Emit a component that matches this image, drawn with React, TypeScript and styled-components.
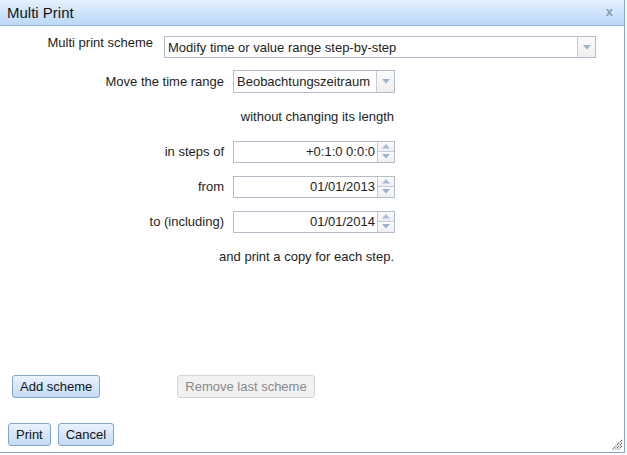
import { createGlobalStyle, default as styled } from "styled-components";

const GlobalStyle = createGlobalStyle`
	html, body {
		margin: 0;
		padding: 0;
		background: #ffffff;
	}
	body {
		font-family: "Liberation Sans", Arial, sans-serif;
		font-size: 13px;
		color: #1e1e1e;
	}
`;

const Dialog = styled.div`
	width: 624px;
	height: 452px;
	display: flex;
	flex-direction: column;
	border-right: 1px solid #7fa9d6;
	border-bottom: 1px solid #7fa9d6;
	background: #ffffff;
	position: relative;
`;

const TitleBar = styled.div`
	flex: 0 0 25px;
	display: flex;
	align-items: center;
	justify-content: space-between;
	padding: 0 11px 0 7px;
	background: linear-gradient(to bottom, #e4f0fd 0%, #cfe4fb 50%, #bcd8f7 100%);
	border-bottom: 1px solid #8db2dc;
	font-size: 15px;
	color: #141414;
`;

const CloseButton = styled.span`
	font-size: 13px;
	font-weight: bold;
	color: #8e9cad;
	cursor: pointer;
	margin-top: -2px;
`;

const Body = styled.div`
	flex: 1;
	display: flex;
	flex-direction: column;
`;

const SchemeRow = styled.div`
	display: flex;
	align-items: flex-start;
	margin-top: 10px;
`;

const SchemeLabel = styled.div`
	width: 153px;
	text-align: right;
	margin-right: 11px;
	margin-top: -1px;
	line-height: 15px;
`;

const FormGrid = styled.div`
	display: grid;
	grid-template-columns: 224px 162px;
	grid-auto-rows: 35px;
	column-gap: 9px;
	align-items: center;
	margin-top: 6px;
`;

const Label = styled.div`
	text-align: right;
`;

const Note = styled.div`
	grid-column: 1 / -1;
	text-align: right;
	padding-right: 1px;
`;

const SelectBox = styled.div<{ $width: number; $height: number }>`
	width: ${(p) => p.$width}px;
	height: ${(p) => p.$height}px;
	box-sizing: border-box;
	border: 1px solid #b4bdcc;
	display: flex;
	align-items: stretch;
	background: #ffffff;
`;

const SelectText = styled.div`
	flex: 1;
	display: flex;
	align-items: center;
	padding-left: 3px;
	white-space: nowrap;
	overflow: hidden;
`;

const ArrowBox = styled.div`
	flex: 0 0 17px;
	border-left: 1px solid #c6ccd6;
	background: linear-gradient(to bottom, #fbfbfb, #eeeeee);
	display: flex;
	align-items: center;
	justify-content: center;
`;

const InputBox = styled.div`
	width: 162px;
	height: 22px;
	box-sizing: border-box;
	border: 1px solid #b4bdcc;
	display: flex;
	align-items: stretch;
	background: #ffffff;
`;

const InputText = styled.div`
	flex: 1;
	display: flex;
	align-items: center;
	justify-content: flex-end;
	padding-right: 2px;
`;

const Spinner = styled.div`
	flex: 0 0 16px;
	border-left: 1px solid #c6ccd6;
	display: flex;
	flex-direction: column;
`;

const SpinHalf = styled.div<{ $top?: boolean }>`
	flex: 1;
	display: flex;
	align-items: center;
	justify-content: center;
	background: linear-gradient(to bottom, #fbfbfb, #efefef);
	border-top: ${(p) => (p.$top ? "none" : "1px solid #c6ccd6")};
`;

const Spacer = styled.div`
	flex: 1;
`;

const SchemeButtons = styled.div`
	display: flex;
	gap: 77px;
	padding-left: 12px;
`;

const Footer = styled.div`
	display: flex;
	gap: 7px;
	padding: 0 8px;
	margin-top: 25px;
	margin-bottom: 6px;
`;

const Button = styled.button<{ $disabled?: boolean }>`
	height: 23px;
	box-sizing: border-box;
	padding: 0 7px;
	font-family: "Liberation Sans", Arial, sans-serif;
	font-size: 13px;
	border-radius: 3px;
	border: 1px solid ${(p) => (p.$disabled ? "#d3d3d3" : "#7fa6d3")};
	background: ${(p) =>
		p.$disabled
			? "#f1f1f1"
			: "linear-gradient(to bottom, #eaf3fd 0%, #d5e6f9 50%, #c4dcf5 100%)"};
	color: ${(p) => (p.$disabled ? "#8a8a8a" : "#141414")};
	cursor: ${(p) => (p.$disabled ? "default" : "pointer")};
`;

const Grip = styled.svg`
	position: absolute;
	right: 1px;
	bottom: 1px;
`;

function DownArrow() {
	return <svg width="8" height="5" viewBox="0 0 8 5">
		<path d="M0 0 H8 L4 4.5 Z" fill="#9bb0d2" />
	</svg>;
}

function UpArrow() {
	return <svg width="8" height="5" viewBox="0 0 8 5">
		<path d="M0 4.5 H8 L4 0 Z" fill="#a8bbd8" />
	</svg>;
}

function Select(props: { value: string; width: number; height: number }) {
	return <SelectBox $width={props.width} $height={props.height}>
		<SelectText>{props.value}</SelectText>
		<ArrowBox><DownArrow /></ArrowBox>
	</SelectBox>;
}

function SpinInput(props: { value: string }) {
	return <InputBox>
		<InputText>{props.value}</InputText>
		<Spinner>
			<SpinHalf $top><UpArrow /></SpinHalf>
			<SpinHalf><DownArrow /></SpinHalf>
		</Spinner>
	</InputBox>;
}

export default function App() {
	return <>
		<GlobalStyle />
		<Dialog>
			<TitleBar>
				Multi Print
				<CloseButton>x</CloseButton>
			</TitleBar>
			<Body>
				<SchemeRow>
					<SchemeLabel>Multi print scheme</SchemeLabel>
					<Select value="Modify time or value range step-by-step" width={432} height={22} />
				</SchemeRow>
				<FormGrid>
					<Label>Move the time range</Label>
					<Select value="Beobachtungszeitraum" width={162} height={23} />
					<Note>without changing its length</Note>
					<Label>in steps of</Label>
					<SpinInput value="+0:1:0 0:0:0" />
					<Label>from</Label>
					<SpinInput value="01/01/2013" />
					<Label>to (including)</Label>
					<SpinInput value="01/01/2014" />
					<Note>and print a copy for each step.</Note>
				</FormGrid>
				<Spacer />
				<SchemeButtons>
					<Button>Add scheme</Button>
					<Button $disabled disabled>Remove last scheme</Button>
				</SchemeButtons>
				<Footer>
					<Button>Print</Button>
					<Button>Cancel</Button>
				</Footer>
			</Body>
			<Grip width="12" height="12" viewBox="0 0 12 12">
				<path d="M11 1 L1 11 M11 4 L4 11 M11 7 L7 11" stroke="#444" strokeWidth="1.2" strokeDasharray="1 1" />
			</Grip>
		</Dialog>
	</>;
}
